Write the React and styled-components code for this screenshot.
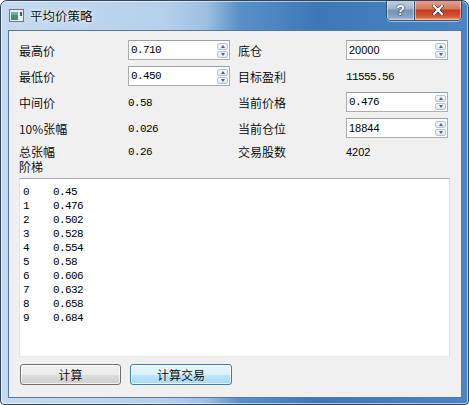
import React from "react";
import styled, { createGlobalStyle } from "styled-components";

const Global = createGlobalStyle`
  body {
    margin: 0;
    background: #fff;
  }
`;

const Window = styled.div`
  width: 469px;
  height: 405px;
  box-sizing: border-box;
  border: 1px solid #34465c;
  border-radius: 7px 7px 4px 4px;
  padding: 0 6px 6px 7px;
  display: flex;
  flex-direction: column;
  background: linear-gradient(
    to right,
    #c4daf0 0%,
    #b6d0eb 35%,
    #9cbfe3 44%,
    #5a90c8 51%,
    #3c78b6 68%,
    #4a86c3 100%
  );
  box-shadow: inset 0 0 0 1px rgba(255, 255, 255, 0.55);
  font-family: "Noto Sans CJK SC", "Liberation Sans", sans-serif;
  overflow: hidden;
`;

const TitleBar = styled.div`
  height: 29px;
  flex: none;
  display: flex;
  align-items: flex-start;
`;

const TitleIcon = styled.svg`
  margin: 8px 0 0 1px;
  flex: none;
`;

const TitleText = styled.div`
  margin: 6px 0 0 6px;
  font-size: 12.5px;
  font-weight: 350;
  line-height: 17px;
  color: #000;
  text-shadow: 0 0 6px rgba(255, 255, 255, 0.9), 0 0 3px rgba(255, 255, 255, 0.9);
`;

const CaptionButtons = styled.div`
  margin: -1px 0 0 auto;
  display: flex;
  height: 20px;
  border: 1px solid #3b5069;
  border-top: none;
  border-radius: 0 0 5px 5px;
  overflow: hidden;
  box-shadow: 0 1px 0 rgba(255, 255, 255, 0.5);
`;

const CaptionButton = styled.div`
  width: ${(p) => p.$w}px;
  height: 100%;
  display: flex;
  align-items: center;
  justify-content: center;
  box-sizing: border-box;
  border-left: ${(p) => (p.$first ? "none" : "1px solid #3b5069")};
  background: ${(p) =>
    p.$close
      ? "linear-gradient(to bottom, #e8a597 0%, #d6785f 45%, #c43c1e 50%, #d4532f 80%, #e89a75 100%)"
      : "linear-gradient(to bottom, #c3d3e4 0%, #9fb6d0 45%, #7893b4 50%, #849fc0 80%, #a9c0da 100%)"};
  box-shadow: inset 0 0 0 1px rgba(255, 255, 255, 0.45);
  color: #fff;
  font-family: "Liberation Sans", sans-serif;
  font-weight: bold;
  font-size: 14px;
  text-shadow: 0 0 2px #1d2f46, 0 0 1px #1d2f46;
`;

const Client = styled.div`
  flex: 1;
  box-sizing: border-box;
  background: #f0f0f0;
  border: 1px solid #57779d;
  padding: 9px 11px 12px 10px;
  display: flex;
  flex-direction: column;
  font-size: 12px;
  color: #000;
`;

const Form = styled.div`
  display: grid;
  grid-template-columns: 109px 110px 108px 1fr;
  grid-template-rows: 20px 20px 20px 20px 14px;
  row-gap: 6px;
  align-items: center;
`;

const Label = styled.div`
  font-size: 12px;
  font-weight: 350;
  line-height: 14px;
  white-space: nowrap;
  margin-top: 1px;
`;

const Value = styled.div`
  font-family: ${(p) => (p.$sans ? '"Liberation Sans", sans-serif' : '"Liberation Mono", monospace')};
  font-size: 11px;
  letter-spacing: ${(p) => (p.$sans ? "0" : "-0.6px")};
  line-height: 14px;
  margin-top: 1px;
`;

const SpinBox = styled.div`
  width: 102px;
  height: 20px;
  box-sizing: border-box;
  border: 1px solid #abadb3;
  border-top-color: #9a9ea6;
  background: #fff;
  display: flex;
  align-items: center;
`;

const SpinText = styled.div`
  flex: 1;
  padding-left: 2px;
  font-family: ${(p) => (p.$sans ? '"Liberation Sans", sans-serif' : '"Liberation Mono", monospace')};
  font-size: 11px;
  letter-spacing: ${(p) => (p.$sans ? "0" : "-0.6px")};
  line-height: 14px;
`;

const Arrows = styled.div`
  width: 11px;
  margin-right: 1px;
  display: flex;
  flex-direction: column;
  gap: 1px;
`;

const ArrowBtn = styled.div`
  height: 7px;
  box-sizing: border-box;
  border: 1px solid #b7c3d3;
  border-radius: 2px;
  background: linear-gradient(to bottom, #f4f7fb, #dfe7f1);
  display: flex;
  align-items: center;
  justify-content: center;
`;

const Tri = styled.div`
  width: 0;
  height: 0;
  border-left: 2.5px solid transparent;
  border-right: 2.5px solid transparent;
  ${(p) => (p.$up ? "border-bottom: 3px solid #4d6185;" : "border-top: 3px solid #4d6185;")}
`;

const Caption = styled(Label)`
  margin-top: 3px;
  height: 12px;
  line-height: 12px;
`;

const ListBox = styled.div`
  margin-top: 5px;
  height: 179px;
  box-sizing: border-box;
  border: 1px solid #828790;
  border-color: #abadb3 #dbdfe6 #e3e9ef #e2e3ea;
  background: #fff;
  padding: 6px 0 0 3px;
`;

const ListRow = styled.div`
  display: grid;
  grid-template-columns: 30px 1fr;
  height: 14px;
  line-height: 14px;
  font-family: "Liberation Mono", monospace;
  font-size: 11px;
  letter-spacing: -0.6px;
`;

const ButtonRow = styled.div`
  margin-top: 7px;
  padding-left: 1px;
  display: flex;
  gap: 9px;
`;

const Button = styled.div`
  width: ${(p) => p.$w}px;
  height: 21px;
  box-sizing: border-box;
  border: 1px solid ${(p) => (p.$default ? "#3c7fb1" : "#707070")};
  border-radius: 3px;
  background: ${(p) =>
    p.$default
      ? "linear-gradient(to bottom, #eaf6fd 0%, #d9f0fc 50%, #bee6fd 51%, #a7d9f5 100%)"
      : "linear-gradient(to bottom, #f2f2f2 0%, #ebebeb 50%, #dddddd 51%, #cfcfcf 100%)"};
  box-shadow: inset 0 0 0 1px rgba(255, 255, 255, 0.7);
  display: flex;
  align-items: center;
  justify-content: center;
  font-size: 12px;
  font-weight: 350;
  line-height: 14px;
`;

const ladder = ["0.45", "0.476", "0.502", "0.528", "0.554", "0.58", "0.606", "0.632", "0.658", "0.684"];

function Spin({ value, sans }) {
  return (
    <SpinBox>
      <SpinText $sans={sans}>{value}</SpinText>
      <Arrows>
        <ArrowBtn>
          <Tri $up />
        </ArrowBtn>
        <ArrowBtn>
          <Tri />
        </ArrowBtn>
      </Arrows>
    </SpinBox>
  );
}

export default function App() {
  return (
    <>
      <Global />
      <Window>
        <TitleBar>
          <TitleIcon width="15" height="13" viewBox="0 0 15 13">
            <rect x="0.5" y="0.5" width="14" height="12" fill="#e8ecef" stroke="#6b7480" />
            <rect x="2" y="3" width="7" height="8" fill="#3f8f7a" />
            <rect x="2" y="3" width="7" height="3" fill="#6fb39c" />
            <rect x="11" y="3" width="2" height="4" fill="#4a5560" />
          </TitleIcon>
          <TitleText>平均价策略</TitleText>
          <CaptionButtons>
            <CaptionButton $w={27} $first>?</CaptionButton>
            <CaptionButton $w={47} $close>
              <svg width="12" height="10" viewBox="0 0 12 10">
                <path d="M2 1 L10 9 M10 1 L2 9" stroke="#1d2f46" strokeWidth="3.4" strokeLinecap="square" />
                <path d="M2 1 L10 9 M10 1 L2 9" stroke="#fff" strokeWidth="2.2" strokeLinecap="square" />
              </svg>
            </CaptionButton>
          </CaptionButtons>
        </TitleBar>
        <Client>
          <Form>
            <Label>最高价</Label>
            <Spin value="0.710" />
            <Label>底仓</Label>
            <Spin value="20000" sans />

            <Label>最低价</Label>
            <Spin value="0.450" />
            <Label>目标盈利</Label>
            <Value>11555.56</Value>

            <Label>中间价</Label>
            <Value>0.58</Value>
            <Label>当前价格</Label>
            <Spin value="0.476" />

            <Label>10%张幅</Label>
            <Value>0.026</Value>
            <Label>当前仓位</Label>
            <Spin value="18844" sans />

            <Label>总张幅</Label>
            <Value>0.26</Value>
            <Label>交易股数</Label>
            <Value $sans>4202</Value>
          </Form>
          <Caption>阶梯</Caption>
          <ListBox>
            {ladder.map((v, i) => (
              <ListRow key={i}>
                <span>{i}</span>
                <span>{v}</span>
              </ListRow>
            ))}
          </ListBox>
          <ButtonRow>
            <Button $w={101}>计算</Button>
            <Button $w={102} $default>
              计算交易
            </Button>
          </ButtonRow>
        </Client>
      </Window>
    </>
  );
}
